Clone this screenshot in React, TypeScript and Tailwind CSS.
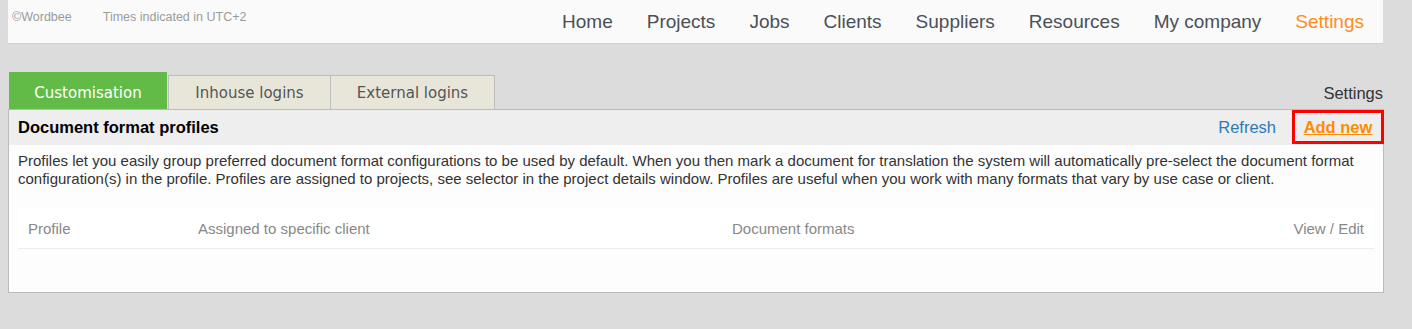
import React from 'react'

const navItems = ['Home', 'Projects', 'Jobs', 'Clients', 'Suppliers', 'Resources', 'My company']

export default function App() {
  return (
    <div
      className="min-h-[329px] w-[1412px] bg-[#dcdcdc] pl-2"
      style={{ fontFamily: '"Liberation Sans", Arial, sans-serif' }}
    >
      {/* top bar */}
      <div className="flex h-[44px] w-[1375px] items-start border-b border-[#d0d0d0] bg-[#fafafa]">
        <div className="flex gap-[31px] pl-[4px] pt-[8px] text-[12.5px] text-[#9a9a9a]">
          <span>©Wordbee</span>
          <span>Times indicated in UTC+2</span>
        </div>
        <nav className="ml-auto flex gap-[34px] pr-[19px] pt-[8px] text-[19px] text-[#4a5058]">
          {navItems.map((n) => (
            <span key={n}>{n}</span>
          ))}
          <span className="text-[#ff8c1a]">Settings</span>
        </nav>
      </div>

      {/* tabs */}
      <div className="mt-[28px] flex w-[1376px] items-end">
        <div
          className="flex items-end"
          style={{ fontFamily: '"DejaVu Sans", Verdana, sans-serif' }}
        >
          <div className="ml-px flex h-[37px] w-[158px] items-center justify-center bg-[#62bb47] pt-[5px] text-[15px] text-white">
            Customisation
          </div>
          <div className="ml-px flex h-[34px] w-[163px] items-center justify-center border border-b-0 border-[#bdbdbd] bg-[#e8e6d9] pt-[2px] text-[15px] text-[#555]">
            Inhouse logins
          </div>
          <div className="flex h-[34px] w-[164px] items-center justify-center border border-b-0 border-l-0 border-[#bdbdbd] bg-[#e8e6d9] pt-[2px] text-[15px] text-[#555]">
            External logins
          </div>
        </div>
        <div className="ml-auto pb-[3px] pr-px text-[16.5px] text-[#333]">Settings</div>
      </div>

      {/* panel */}
      <div className="w-[1376px] border border-[#bbbbbb] bg-[#fdfdfd]">
        <div className="flex h-[35px] items-center bg-[#eeeeee] pl-[9px]">
          <span className="text-[16.5px] font-bold text-black">Document format profiles</span>
          <span className="ml-auto mr-[16px] text-[16.5px] text-[#2a7ab8]">Refresh</span>
          <div className="-mr-px flex h-[34px] w-[92px] items-center justify-center self-start border-[3px] border-[#ff0000]">
            <span className="text-[16.5px] font-bold text-[#ff8c00] underline">Add new</span>
          </div>
        </div>
        <p className="px-[9px] pt-[7px] text-[15px] leading-[18px] text-[#333]">
          Profiles let you easily group preferred document format configurations to be used by default. When you then mark a document for translation the system will automatically pre-select the document format configuration(s) in the profile. Profiles are assigned to projects, see selector in the project details window. Profiles are useful when you work with many formats that vary by use case or client.
        </p>
        <div className="mx-[9px] mt-[20px] mb-[43px] bg-white">
          <div className="flex h-[41px] items-center border-b border-[#ececec] pt-[3px] text-[15px] text-[#888]">
            <span className="w-[180px] pl-[10px]">Profile</span>
            <span className="w-[534px]">Assigned to specific client</span>
            <span>Document formats</span>
            <span className="ml-auto pr-[10px]">View / Edit</span>
          </div>
        </div>
      </div>
    </div>
  )
}
